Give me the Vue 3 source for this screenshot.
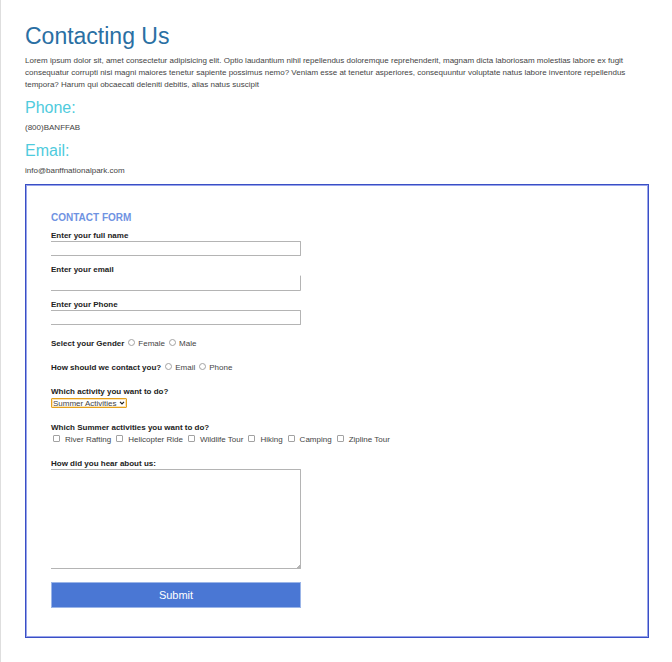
<script setup>
import { ref } from 'vue'

const fields = [
  { id: 'name', label: 'Enter your full name', type: 'text' },
  { id: 'email', label: 'Enter your email', type: 'email' },
  { id: 'phone', label: 'Enter your Phone', type: 'tel' },
]
const values = ref({ name: '', email: '', phone: '' })

const choices = [
  { name: 'gender', title: 'Select your Gender', options: ['Female', 'Male'] },
  { name: 'contact', title: 'How should we contact you?', options: ['Email', 'Phone'] },
]
const picked = ref({ gender: '', contact: '' })

const seasons = ['Summer Activities', 'Winter Activities']
const season = ref(seasons[0])

const activities = ['River Rafting', 'Helicopter Ride', 'Wildlife Tour', 'Hiking', 'Camping', 'Zipline Tour']
const selected = ref([])
const heard = ref('')
</script>

<template>
  <main class="page">
    <h1>Contacting Us</h1>
    <p>
      Lorem ipsum dolor sit, amet consectetur adipisicing elit. Optio laudantium nihil repellendus doloremque
      reprehenderit, magnam dicta laboriosam molestias labore ex fugit consequatur corrupti nisi magni maiores
      tenetur sapiente possimus nemo? Veniam esse at tenetur asperiores, consequuntur voluptate natus labore
      inventore repellendus tempora? Harum qui obcaecati deleniti debitis, alias natus suscipit
    </p>
    <h2>Phone:</h2>
    <p>(800)BANFFAB</p>
    <h2>Email:</h2>
    <p>info@banffnationalpark.com</p>

    <form class="card" @submit.prevent>
      <h3>Contact Form</h3>
      <div class="fields">
        <div v-for="f in fields" :key="f.id" class="field">
          <label class="title" :for="f.id">{{ f.label }}</label>
          <input :id="f.id" v-model="values[f.id]" class="box" :class="f.id" :type="f.type" />
        </div>
      </div>

      <div class="groups">
        <div v-for="c in choices" :key="c.name" class="radios" role="radiogroup" :aria-labelledby="c.name">
          <span :id="c.name" class="title">{{ c.title }}</span>
          <label v-for="o in c.options" :key="o" class="radio">
            <input v-model="picked[c.name]" type="radio" :name="c.name" :value="o" />{{ o }}
          </label>
        </div>

        <div class="field">
          <label class="title" for="season">Which activity you want to do?</label>
          <div class="select">
            <select id="season" v-model="season">
              <option v-for="s in seasons" :key="s">{{ s }}</option>
            </select>
            <svg viewBox="0 0 6 4" aria-hidden="true"><path d="M1 .8 3 2.8 5 .8" /></svg>
          </div>
        </div>

        <div class="field" role="group" aria-labelledby="activities">
          <span id="activities" class="title">Which Summer activities you want to do?</span>
          <div class="checks">
            <label v-for="a in activities" :key="a" class="check">
              <input v-model="selected" type="checkbox" :value="a" />{{ a }}
            </label>
          </div>
        </div>

        <div class="field">
          <label class="title" for="heard">How did you hear about us:</label>
          <textarea id="heard" v-model="heard" class="box"></textarea>
        </div>
      </div>

      <button type="submit">Submit</button>
    </form>
  </main>
</template>

<style>
body {
  background: #fff;
}
</style>

<style scoped>
.page {
  box-sizing: border-box;
  min-height: 100vh;
  padding: 23px 23px 24px 24px;
  border-left: 1px solid #dedede;
  color: #444;
  font: 8px/12px "Liberation Sans", Arial, sans-serif;
}
h1,
h2,
h3,
p {
  margin: 0;
}
h1 {
  margin-bottom: 6px;
  color: #2a6fa3;
  font-size: 23px;
  font-weight: 400;
  line-height: 26px;
}
h2 {
  margin: 7px 0 4px;
  color: #4fcbdd;
  font-size: 16px;
  font-weight: 400;
  line-height: 20px;
}
.card {
  margin-top: 7px;
  padding: 27px 24px 29px 25px;
  border: 1px solid #3a4fc4;
  box-shadow: inset 0 0 0 1px #98a4ec;
}
h3 {
  margin-bottom: 6px;
  color: #6f93e2;
  font-size: 10px;
  line-height: 12px;
  text-transform: uppercase;
}
.title {
  color: #222;
  font-weight: 700;
}
.fields {
  display: grid;
  gap: 8px;
}
.field {
  display: grid;
  justify-items: start;
}
input,
textarea,
select,
button {
  box-sizing: border-box;
  margin: 0;
  border-radius: 0;
  font: inherit;
}
.box {
  width: 250px;
  max-width: 100%;
  height: 15px;
  margin-top: -1px;
  padding: 0 4px;
  border: 1px solid #b4b4b4;
  border-left: 0;
  border-radius: 0 1px 1px 0;
  background: #fff;
  color: #444;
  outline: none;
}
.email {
  height: 16px;
  border-top-color: transparent;
}
textarea.box {
  height: 100px;
  background: linear-gradient(135deg, #fff 50%, #b4b4b4 50%) right bottom / 3px 3px no-repeat #fff;
  resize: none;
}
.groups {
  display: grid;
  gap: 12px;
  margin-top: 13px;
}
.radios,
.radio,
.check,
.checks {
  display: flex;
  align-items: center;
}
.radios {
  gap: 4px;
}
.radio {
  gap: 3px;
}
.radio input,
.check input {
  width: 7px;
  height: 7px;
  margin-bottom: 3px;
  border: 1px solid #a2a2a2;
  appearance: none;
}
.radio input {
  border-radius: 50%;
}
.radio input:checked,
.check input:checked {
  background: #4a77d4;
}
.check input {
  border-radius: 1px;
}
.checks {
  flex-wrap: wrap;
  gap: 0 5px;
  padding-left: 2px;
}
.check {
  gap: 5px;
}
.select {
  display: grid;
  align-items: center;
  padding-bottom: 2px;
}
.select > * {
  grid-area: 1 / 1;
}
select {
  height: 10px;
  padding: 1px 8px 0 1px;
  border: 1px solid #e5a11c;
  border-radius: 1px;
  background: #fff;
  box-shadow: inset 0 0 0 1px #fbe3b5;
  color: #444;
  line-height: 8px;
  outline: none;
  appearance: none;
}
.select svg {
  justify-self: end;
  width: 6px;
  height: 4px;
  margin-right: 2px;
  fill: none;
  stroke: #222;
  stroke-width: 1.2;
  pointer-events: none;
}
button {
  display: block;
  width: 250px;
  max-width: 100%;
  height: 26px;
  margin-top: 13px;
  padding: 0;
  border: 1px solid #9bb5e8;
  background: #4a77d4;
  color: #fff;
  font-size: 11px;
}
</style>
